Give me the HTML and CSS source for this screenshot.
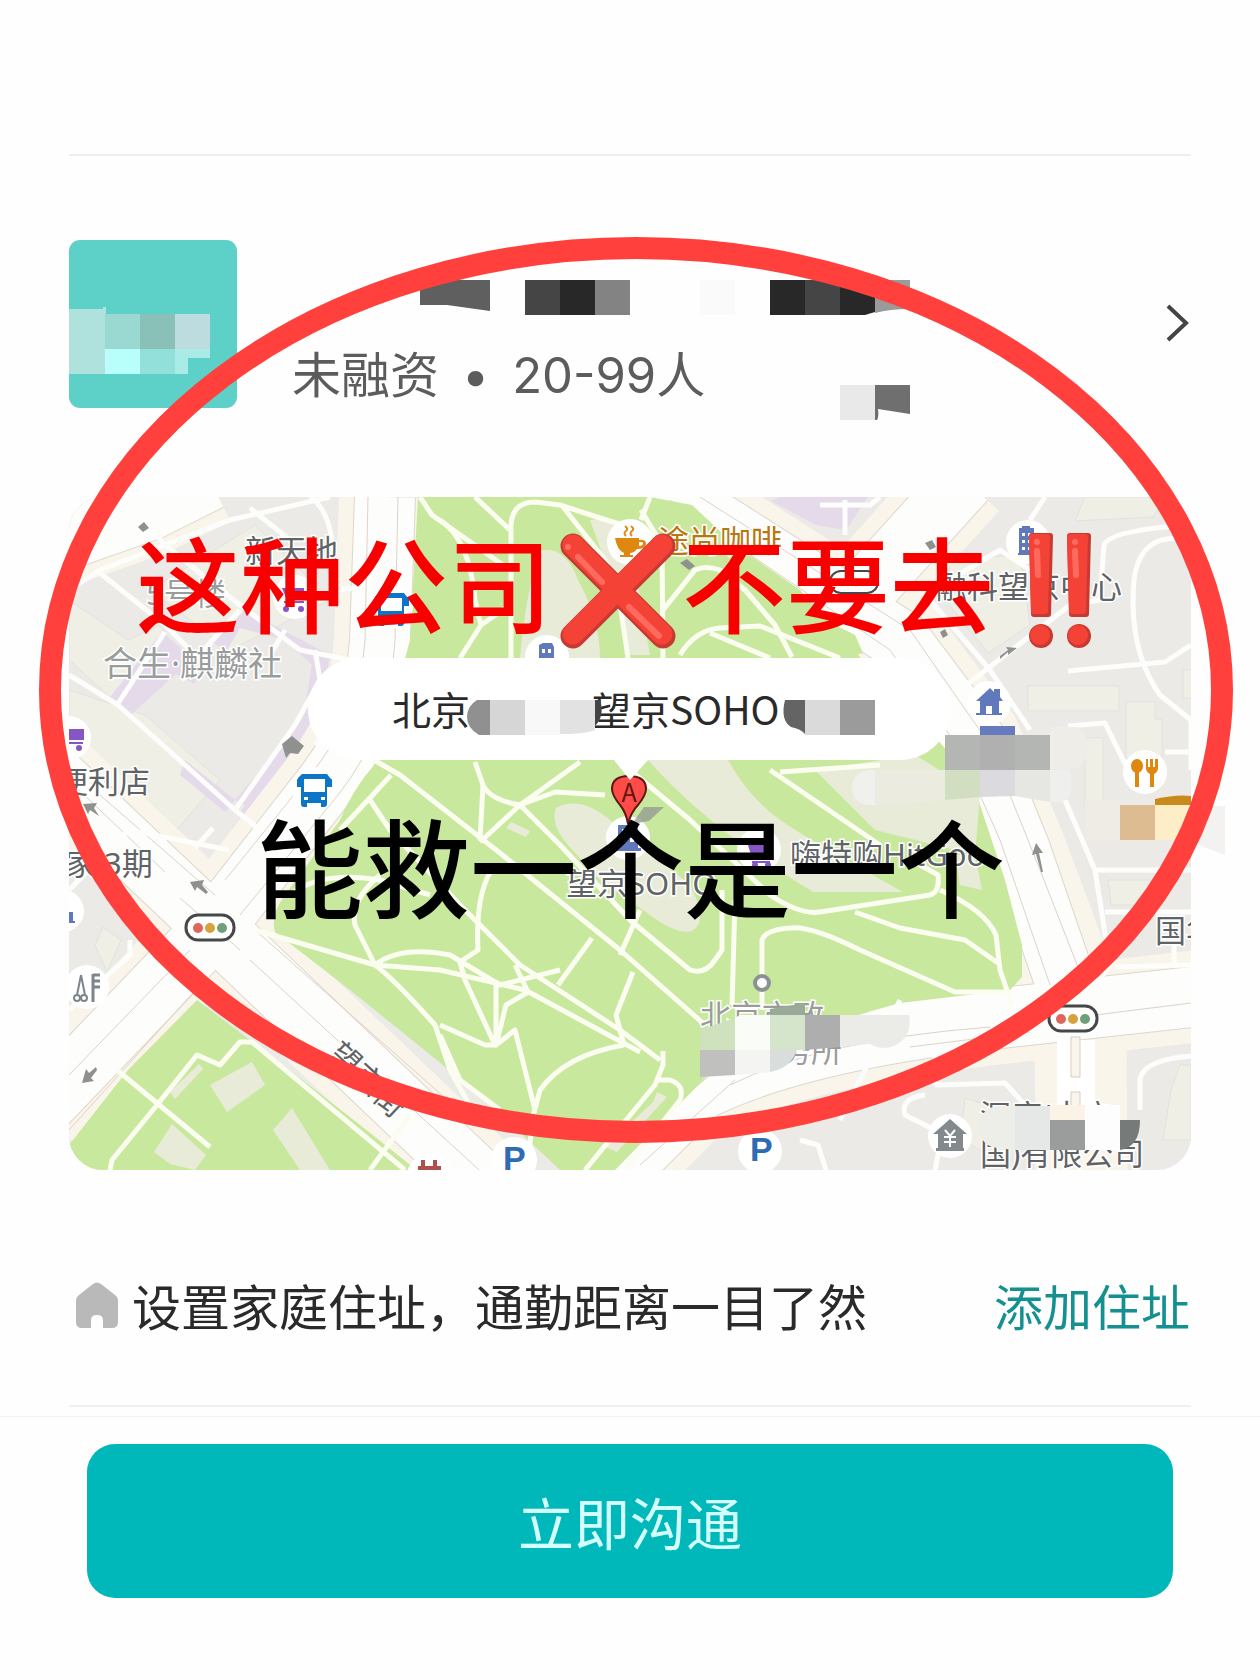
FILE: index.html
```html
<!DOCTYPE html>
<html lang="zh-CN">
<head>
  <meta charset="UTF-8" />
  <meta name="viewport" content="width=device-width, initial-scale=1.0"/>
  <title>公司信息</title>
  <link rel="stylesheet" href="styles.css">
</head>
<body>
  <main class="page">
    <a class="company" href="#">
      <svg class="logo" viewBox="0 0 168 168" aria-hidden="true">
        <rect width="168" height="168" rx="11" fill="#5dd0c7"/>
        <path fill="#b0e2dd" d="M0 69h34v-2h3v67H0z"/>
        <path fill="#9ad8d2" d="M36 74h35v35H36z"/>
        <path fill="#89c0b8" d="M71 74h35v35H71z"/>
        <path fill="#bddcdf" d="M106 74h35v35h-35z"/>
        <path fill="#b8fffc" d="M36 109h35v25H36z"/>
        <path fill="#93dfda" d="M71 109h35v25H71z"/>
        <path fill="#a8ebe7" d="M106 109h35v9h-22v16h-13z"/>
      </svg>
      <div class="info">
        <svg class="name" viewBox="292 280 618 35" aria-label="公司名称">
          <path fill="#5f5f5f" d="M420 280h70v31l-43-6h-27z"/>
          <path fill="#454545" d="M525 280h35v35h-35z"/>
          <path fill="#282828" d="M560 280h35v35h-35z"/>
          <path fill="#838383" d="M595 280h35v35h-35z"/>
          <path fill="#fafafa" d="M700 280h35v35h-35z"/>
          <path fill="#282828" d="M770 280h35v35h-35z"/>
          <path fill="#454545" d="M805 280h35v35h-35z"/>
          <path fill="#282828" d="M840 280h35v32l-10 3h-25z"/>
          <path fill="#9a9a9a" d="M875 280h35v29q-20 0-35 4z"/>
        </svg>
        <div class="meta">
          <div class="facts">未融资 <span class="dot">•</span> 20-99人</div>
          <svg class="smear" viewBox="0 0 70 35" aria-hidden="true">
            <path fill="#e9e9e9" d="M0 0h35v35H0z"/>
            <path fill="#6f6f6f" d="M35 0h35v29l-32-5q1 8-1 11h-2z"/>
          </svg>
        </div>
      </div>
      <svg class="arrow" viewBox="0 0 24 40" aria-hidden="true">
        <path d="M3 3l18 17L3 37" fill="none" stroke="#444" stroke-width="4"/>
      </svg>
    </a>

    <section class="map-card">
      <svg class="map" viewBox="69 497 1122 673" role="img" aria-label="北京望京SOHO地图">
        <rect x="69" y="497" width="1122" height="673" fill="#ebeae7"/>

        <!-- blocks -->
        <g fill="#efefe6" stroke="#e3e1dc" stroke-width="1">
          <path d="M69 600L128 640 160 625 180 655 130 715 69 660z"/>
          <path d="M69 690L145 715 220 780 150 860 69 790z"/>
          <path d="M150 590L255 525 330 600 230 650z"/>
          <path d="M1028 686h91v25h-91z"/>
          <path d="M1126 702h29v17h7v40h-36z"/>
          <path d="M1085 738h18v70h-18z"/>
          <path d="M950 560l70-5 10 70-42 28-40-50z"/>
          <path d="M1085 497h80l-12 20-78 4z"/>
          <path d="M1108 880h45l10 25h-52z"/>
          <path d="M1183 670h10v28h-10z"/>
          <path d="M1180 1065h11v75h-28l8-50z"/>
          <path d="M95 945l8-18 18 13-14 32z"/>
          <path d="M965 1098l30 10-10 45-25-15z"/>
        </g>
        <g fill="#e4daea">
          <path d="M162 632L204 668 194 684 176 674 132 714 110 697z"/>
          <path d="M213 642L245 610 330 655 315 735 255 820 240 812 300 735 312 665 285 640 240 628 226 652z"/>
          <path d="M320 715L304 765 267 816 235 800 270 760 305 715z"/>
          <path d="M185 760L235 800 225 812 180 775z"/>
          <path d="M780 497h88l-22 33-30-5-45-24z"/>
        </g>

        <!-- main roads, each drawn as shoulder, edge, surface and lane lines -->
        <g class="shoulder">
          <path d="M385 497L380 640Q375 720 325 785L212 930 40 1110"/>
          <path d="M40 762L212 925 490 1190"/>
          <path d="M650 480L900 640 975 740 1020 850 1080 1010 1082 1190"/>
          <path d="M600 1190L700 1090Q800 1040 1010 1017L1210 995"/>
          <path d="M50 545L150 510 210 480"/>
          <path d="M965 480L870 585"/>
        </g>
        <g class="edge">
          <path d="M385 497L380 640Q375 720 325 785L212 930 40 1110"/>
          <path d="M40 762L212 925 490 1190"/>
          <path d="M650 480L900 640 975 740 1020 850 1075 1010"/>
          <path d="M600 1190L700 1090Q800 1040 1010 1017L1210 995"/>
          <path d="M50 545L150 510 210 480"/>
          <path d="M965 480L870 585"/>
        </g>
        <g class="road">
          <path d="M385 497L380 640Q375 720 325 785L212 930 40 1110"/>
          <path d="M40 762L212 925 490 1190"/>
          <path d="M650 480L900 640 975 740 1020 850 1075 1010"/>
          <path d="M600 1190L700 1090Q800 1040 1010 1017L1210 995"/>
          <path d="M50 545L150 510 210 480"/>
          <path d="M965 480L870 585"/>
        </g>
        <g class="lane">
          <path d="M368 497L365 640Q360 715 310 775L225 880M398 497L395 640Q390 730 338 795L240 915"/>
          <path d="M60 772L165 872M180 898L240 950M250 960L490 1180M100 795L215 895M255 930L470 1120"/>
          <path d="M190 950L69 1075M200 985L69 1130"/>
          <path d="M670 500L890 650 960 750 1000 840 1050 985M700 497L910 630 990 745 1040 870 1085 985"/>
          <path d="M610 1160L710 1075M640 1165L735 1080M730 1085Q820 1040 990 1027M1095 1015L1191 1003M910 1047L1030 1032"/>
        </g>
        <path d="M1057 1040h38v70h-38z" fill="#fff"/>
        <path d="M1071 1037h9v40h-9zM1071 1092h9v20h-9z" fill="#faf5ec" stroke="#d8cdbf"/>

        <!-- parks -->
        <g fill="#c8e89d">
          <path d="M418 497L410 640 378 760Q352 790 340 820L285 895Q270 915 275 932L350 990 480 1095 560 1170H615L710 1073Q800 1030 900 1003L1010 990 1022 977V945L1005 880 970 775 860 657 800 590 735 545 692 505 650 497z"/>
          <path d="M835 625l20 10 8 18-18 5-35-20z"/>
          <path d="M197 1000L128 1070 69 1145V1175H420L410 1165Q330 1100 197 1000z"/>
        </g>
        <g fill="#e9ebd9">
          <path d="M540 551Q565 545 578 580 600 620 600 658H520Q526 590 540 551z"/>
          <path d="M590 520q30-5 40 20l20 115h-22L610 575z"/>
          <path d="M648 760h80q22 40 55 62 30 20 120 70h-90Q710 830 648 760z"/>
          <path d="M815 770l100-15 65 40-5 60-100-25z"/>
          <path d="M556 808Q580 795 610 820L690 885Q705 915 698 925 690 940 660 922L600 880 568 845Q550 825 556 808z"/>
          <path d="M511 822l19 9-4 6-20-9z"/>
          <path d="M210 1085L252 1062 265 1085 227 1112z"/>
          <path d="M170 1092l29-28 4 5-28 30z"/>
          <path d="M273 1130L292 1108 330 1170H300z"/>
          <path d="M154 1152L172 1124 206 1155 195 1170 170 1164z"/>
          <path d="M657 1092l10 5-50 55-12-5 48-45z"/>
          <path d="M955 855h20l7 35-22-5z"/>
        </g>

        <!-- park paths -->
        <g class="path">
          <path d="M420 497L432 515 510 570M475 497L510 530M650 497L641 520"/>
          <path d="M511 658V530Q510 502 535 502L560 505 600 518 655 535 690 550"/>
          <path d="M563 507L605 560 618 590 628 658M641 510L662 545 663 658"/>
          <path d="M440 520Q470 540 475 600L481 625 460 658M481 625L510 605"/>
          <path d="M663 610L695 570Q705 565 720 570L745 590 775 625 792 657M680 655Q695 630 720 628L760 626 840 658M710 633L770 658"/>
          <path d="M374 760L400 775 500 853 620 950 705 1025"/>
          <path d="M391 775L368 800 340 830M370 800L390 830 460 905 520 965 620 1030 660 1060"/>
          <path d="M475 762L483 785Q490 800 520 805L560 845 630 920 690 970Q705 975 715 960L722 950V890"/>
          <path d="M483 785L480 840M580 762L520 805 480 842M520 805L555 792 605 795"/>
          <path d="M630 770L690 820 770 895Q800 915 820 912L930 895Q940 892 938 875L920 865"/>
          <path d="M770 770L880 845M780 772L880 765"/>
          <path d="M855 912L900 928 965 940 998 963M940 890Q985 910 996 935L1000 970 1012 1005"/>
          <path d="M762 1010V940Q765 930 790 928 810 925 860 950L955 992H1010"/>
          <path d="M735 900L732 1005M640 910L620 955M592 938L558 985M633 972L616 1015 624 1045"/>
          <path d="M255 930L375 965Q395 980 435 1025L450 1070 475 1115"/>
          <path d="M375 965Q400 945 450 955L500 985 560 970M375 965L440 970 525 990 640 1052"/>
          <path d="M290 895Q320 870 380 880L430 895M380 875Q350 900 355 925L375 965"/>
          <path d="M495 865Q475 890 478 950L460 962 465 980 495 1045M496 980V1045L515 1030 535 1110"/>
          <path d="M440 1025L485 1045H496L506 1005 528 992 515 965"/>
          <path d="M440 1035L460 1080 500 1110"/>
          <path d="M624 1045Q565 1055 540 1090L532 1120 528 1170"/>
          <path d="M663 1051V1065L655 1085 585 1170M655 1080H670Q685 1085 680 1100L625 1170"/>
          <path d="M117 1070L210 1147M157 1105L197 1055 220 1065 240 1042H252L405 1170M157 1105L112 1160 110 1170"/>
          <path d="M370 1170L410 1115"/>
        </g>

        <!-- side streets -->
        <g class="street">
          <path d="M69 675L118 705 185 765 235 810 260 830"/>
          <path d="M69 590L100 570 230 520 330 497M140 515L165 545 240 605 300 650 350 660"/>
          <path d="M100 573L165 625 200 660M117 705L165 632M190 500L195 520M250 508L290 540M310 497Q330 510 333 550"/>
          <path d="M240 610L190 665M285 630L270 655M235 810L295 725 320 680 315 650"/>
          <path d="M340 590l20-3M69 890l60-60 100 20M195 848l18-20M69 1010L130 955V940"/>
          <path d="M350 700L315 745M960 690L1070 605 1100 600 1104 545Q1110 530 1191 525"/>
          <path d="M1191 540Q1140 530 1134 580 1128 650 1160 695L1191 720V770M1068 671L1165 662 1191 645M1068 726L1105 723 1128 770"/>
          <path d="M1045 497L1030 520M950 580L1000 550 1030 570M930 600L990 670 1030 730"/>
          <path d="M1065 800L1095 870 1110 965 1085 1000M1095 870h96M1105 912h86M1115 967L1191 965M1174 965v-20M1165 752h26"/>
          <path d="M900 1000L840 1120M935 1085V1050M935 1085L1005 1083 1025 1105M925 1095Q900 1098 905 1115L935 1130M1140 1110V1080Q1142 1060 1191 1056"/>
          <path d="M800 1140l18 5 8 25M935 1170l5-25"/>
          <path d="M845 500v35M820 505h50l10-8"/>
        </g>

        <!-- direction arrows -->
        <g fill="#8f918e">
          <path d="M82 1083l4-14 3 4 7-6 1 3-6 8 3 3z"/>
          <path d="M190 882l14-2-2 5 6 7-2 2-9-7-2 4z"/>
          <path d="M83 804l14-1-3 5 5 8-9-6-2 4z"/>
          <path d="M1036 843l7 10h-4l4 19h-2l-5-18-4 1z"/>
          <path d="M1017 648l-9 7v-3l-8 7v-3l8-6-2-3z"/>
          <path d="M282 744l10-8 12 10-6 8-8-1-4 5z"/>
          <path d="M138 527l6-5 5 6-6 4zM680 563l7-4 8 7-6 4zM925 543l7-3 4 7-6 3zM940 632l5-3 3 6-5 3z"/>
        </g>

        <!-- place labels -->
        <g class="label">
          <text x="245" y="562">新天地</text>
          <text x="146" y="605" class="dim">5号楼</text>
          <text x="103" y="676" class="dim wide">合生·麒麟社</text>
          <text x="57" y="793">便利店</text>
          <text x="65" y="875">家 3期</text>
          <text x="936" y="598">融科望京中心</text>
          <text x="658" y="552" class="cafe">途尚咖啡</text>
          <text x="790" y="866">嗨特购HitGoo</text>
          <text x="566" y="895">望京SOHO</text>
          <text x="700" y="1027" class="dim">北京市政</text>
          <text x="780" y="1062" class="dim">务所</text>
          <text x="1155" y="942">国华</text>
          <text x="980" y="1127">深度(中户</text>
          <text x="980" y="1165">国)有限公司</text>
          <text transform="translate(326 1056) rotate(43)">望京街</text>
        </g>

        <!-- place icons -->
        <g fill="#fff">
          <circle cx="69" cy="738" r="22"/><circle cx="295" cy="597" r="22"/><circle cx="314" cy="789" r="22"/>
          <circle cx="391" cy="607" r="22"/><circle cx="630" cy="542" r="23"/><circle cx="547" cy="657" r="22"/>
          <circle cx="1028" cy="542" r="22"/><circle cx="989" cy="703" r="22"/><circle cx="1145" cy="772" r="22"/>
          <circle cx="628" cy="838" r="22"/><circle cx="759" cy="850" r="22"/><circle cx="63" cy="911" r="21"/>
          <circle cx="87" cy="987" r="22"/><circle cx="514" cy="1160" r="23"/><circle cx="760" cy="1151" r="22"/>
          <circle cx="950" cy="1136" r="22"/><circle cx="430" cy="1176" r="23"/>
        </g>
        <g id="bus">
          <path fill="#0d75c8" fill-rule="evenodd" d="M302 774h25l3 4v9h-3v17q0 3-3 3h-3v-4h-14v4h-3q-3 0-3-3v-17h-3v-9zM304 779v13h21v-13zM304 797v3h4v-3zM321 797v3h4v-3z"/>
          <path fill="none" stroke="#0d75c8" stroke-width="2" d="M302 777l-4 3v7M327 777l4 3v7"/>
        </g>
        <use href="#bus" x="77" y="-181"/>
        <g fill="#8657c4">
          <path d="M69 729h15v11H69zM69 742h14v2H69z"/><circle cx="79" cy="748" r="3"/>
          <path d="M282 588h22v10h-18zM284 601h20v2h-20z"/><circle cx="286" cy="609" r="3"/><circle cx="301" cy="609" r="3"/>
          <path d="M747 842l-3-2h4l2 4h22l-3 14h-17zM752 861h18v2h-18z"/><circle cx="755" cy="865" r="3"/><circle cx="768" cy="865" r="3"/>
        </g>
        <path fill="#e08710" d="M615 538h24v2q7-1 7 4 0 5-9 5-3 4-7 4v2h3v2h-13v-2h4v-2q-7-3-9-15zm24 4v4q4 0 4-3 0-1-4-1z"/>
        <path d="M625 526q4 3 1 5t0 5M631 526q4 3 1 5t0 5" fill="none" stroke="#e08710" stroke-width="2"/>
        <g fill="#6079bd" fill-rule="evenodd">
          <path d="M539 645l4-2h9l2 4v11h-15zM542 649v4h3v-4zM548 649v4h3v-4z"/>
          <path d="M1019 528h3v-2h8v2h4v27h-16v-2h1zM1022 533v3h3v-3zM1028 533v3h3v-3zM1022 540v3h3v-3zM1028 540v3h3v-3zM1022 547v3h3v-3zM1028 547v3h3v-3z"/>
          <path d="M976 701l14-13 4 4v-3h6v8l3 4h-4v12h3v2h-26v-2h4v-12zM986 706v8h6v-8z"/>
          <path d="M618 825h20v23h3v3h-26v-3h3zM622 829v4h4v-4zM630 829v4h4v-4zM622 838v4h4v-4zM630 838v4h4v-4z"/>
          <path d="M69 912h4v9h2v2h-6z"/>
        </g>
        <g fill="#e08710">
          <ellipse cx="1137" cy="766" rx="6" ry="7"/><path d="M1135 770h4v17h-4z"/>
          <path d="M1146 759h2v8h2v-8h3v8h2v-8h3v9q0 4-4 6v13h-4v-13q-4-2-4-6z"/>
        </g>
        <g fill="none" stroke="#7d878b" stroke-width="2">
          <path d="M81 975l-4 20M81 975l4 20"/><circle cx="77" cy="998" r="3"/><circle cx="84" cy="998" r="3"/>
          <path d="M93 974v28M93 975h7M93 981h7M93 987h7" stroke-width="3"/>
        </g>
        <path fill="#828a8d" d="M933 1134l17-15 17 15h-4v14h1v3h-28v-3h2v-14z"/>
        <path fill="none" stroke="#fff" stroke-width="2" d="M945 1130l5 6 5-6M944 1137h12M944 1142h12M950 1136v11"/>
        <path fill="#b1504a" d="M418 1166h3v-6h4v6h8v-6h4v6h4v6h-23z"/>
        <circle cx="762" cy="983" r="7" fill="#fff" stroke="#8b9295" stroke-width="4"/>
        <g class="parking">
          <text x="503" y="1170">P</text>
          <text x="750" y="1161">P</text>
        </g>
        <g id="signal">
          <rect x="186" y="915" width="48" height="25" rx="12" fill="#fff" stroke="#454849" stroke-width="3"/>
          <circle cx="198" cy="928" r="5" fill="#e0655c"/><circle cx="210" cy="928" r="5" fill="#d9a13b"/><circle cx="222" cy="928" r="5" fill="#6fa077"/>
        </g>
        <use href="#signal" x="863" y="91"/>
        <rect x="830" y="571" width="48" height="22" rx="11" fill="#fff" stroke="#454849" stroke-width="2"/>

        <!-- smeared names -->
        <path fill="#667bbd" d="M980 726h35v9h-35z"/>
        <path fill="#b4b6b3" d="M945 735h105v35H945z"/>
        <path fill="#b0b0b0" d="M980 735h35v35h-35z"/>
        <path fill="#eeede8" d="M1050 727h25q12 2 12 20t-12 22h-25z"/>
        <path fill="#f0f0ec" d="M875 770h-8q-15 4-15 18t15 17h8z"/>
        <path fill="#ebebe0" d="M875 770h70v30l-60 5h-10z"/>
        <path fill="#d2dec1" d="M945 770h35v27l-35 3z"/>
        <path fill="#dadadf" d="M980 770h35v26l-35 1z"/>
        <path fill="#e6e6e3" d="M1015 770h35v32l-35-6z"/>
        <path fill="#efefee" d="M1050 770h20q5 27-8 32h-12z"/>
        <path fill="#efece6" d="M1085 800h35v40h-35z"/>
        <path fill="#dcbc90" d="M1120 805h35v35h-35z"/>
        <path fill="#fdeec8" d="M1155 805h36v35h-36z"/>
        <path fill="#c98a1c" d="M1155 799q22-5 36-3v9h-36z"/>
        <path fill="#d0e2bd" d="M700 1030l35-12v32h-35z"/>
        <path fill="#c0c1bf" d="M700 1050h35v25l-35 2z"/>
        <path fill="#fafcf7" d="M735 1018l5-3h30v35h-35z"/>
        <path fill="#f4f4f2" d="M735 1050h35v22l-35 3z"/>
        <path fill="#9aaa98" d="M770 1009l35-6v12h-35z"/>
        <path fill="#d5e5cb" d="M770 1015h35v35h-35z"/>
        <path fill="#d9dddb" d="M770 1050h27q-6 18-27 22z"/>
        <path fill="#aeaeae" d="M805 1015h35v32l-35 3z"/>
        <path fill="#ebebe7" d="M840 1015h69q4 22-15 31-12 5-24-2l-30 3z"/>
        <path fill="#eeeee8" d="M1015 1106h-18q-20 4-18 25 3 15 18 17l18 2z"/>
        <path fill="#e6e8e7" d="M1015 1106h35v44h-35z"/>
        <path fill="#fbf3e5" d="M1050 1105h35v15h-35z"/>
        <path fill="#9a9d9c" d="M1050 1120h35v30h-35z"/>
        <path fill="#fdfdfd" d="M1085 1105h35v45h-35z"/>
        <path fill="#767a78" d="M1120 1120h20q0 27-20 30z"/>

        <!-- address bubble and pin -->
        <path fill="#8f918e" fill-opacity=".7" d="M632 824l12-17 20 0-15 14z"/>
        <path fill="#ff4c48" stroke="#5e1712" stroke-width="2" d="M628 824q-2-12-8-19-8-10-8-16 0-13 17-13t17 13q0 6-8 16-7 7-10 19z"/>
        <text x="629" y="802" class="pin">A</text>
        <path fill="#fff" d="M359 658H900a51 51 0 0 1 0 102H648l-18 20-16-20H359a51 51 0 0 1 0-102z"/>
        <text x="392" y="725" class="address">北京</text>
        <text x="592" y="725" class="address">望京SOHO</text>
        <path fill="#909090" d="M490 700h-13q-10 6-10 17t12 18h11z"/>
        <path fill="#d6d6d6" d="M490 700h35v35h-35z"/>
        <path fill="#f8f8f8" d="M525 700h35v35h-35z"/>
        <path fill="#e2e2e2" d="M560 700h35v30q-10 4-35 4z"/>
        <path fill="#444" d="M595 700h5q5 16-5 26z"/>
        <path fill="#646464" d="M805 700h-20q-5 20 6 27 10 2 14 7z"/>
        <path fill="#dadada" d="M805 700h35v35h-35z"/>
        <path fill="#9b9b9b" d="M840 700h35v35h-35z"/>
      </svg>

      <!-- hand-drawn ring and captions lie over the card -->
      <svg class="notes" viewBox="69 497 1122 673">
        <path fill="#f3f2f0" d="M1191 806h34v49l-34-13z"/>
        <g class="caption">
          <text x="136" y="626" fill="#f90000">这种公司</text>
          <text x="682" y="626" fill="#f90000">不要去</text>
          <text x="256" y="910" class="second">能救一个是一个</text>
        </g>
        <g fill="none" stroke-linecap="round">
          <path d="M573 546l90 90M663 546l-90 90" stroke="#c73a34" stroke-width="25"/>
          <path d="M573 545l89 89M662 545l-89 89" stroke="#f44336" stroke-width="21"/>
          <path d="M578 557l24 25M629 607l30 29" stroke="#ff6a5e" stroke-width="6"/>
        </g>
        <circle cx="568" cy="547" r="3" fill="#ff6a5e"/>
        <g id="mark">
          <path fill="#c73a34" d="M1032 533h18q3 0 3 3l-2 78q0 3-3 3h-14q-3 0-3-3l-2-78q0-3 3-3z"/>
          <path fill="#f44336" d="M1032 534h15q3 0 3 3l-2 74q0 3-3 3h-11q-3 0-3-3l-2-74q0-3 3-3z"/>
          <path d="M1037 551l1 24" stroke="#ff6a5e" stroke-width="6" stroke-linecap="round"/>
          <circle cx="1037" cy="542" r="3" fill="#ff6a5e"/>
          <circle cx="1041" cy="636" r="12" fill="#c73a34"/>
          <circle cx="1040" cy="635" r="10" fill="#f44336"/>
        </g>
        <use href="#mark" x="38"/>
        <ellipse cx="636" cy="690" rx="586" ry="442" fill="none" stroke="#ff403c" stroke-width="22"/>
      </svg>
    </section>

    <section class="commute">
      <svg class="home" viewBox="0 0 42 46" aria-hidden="true">
        <path fill="#b9b9b9" d="M17 2q4-3 8 0l14 11q3 2 3 6v21q0 6-6 6h-9V38q0-5-6-5t-6 5v8H6q-6 0-6-6V19q0-4 3-6z"/>
      </svg>
      <span>设置家庭住址，通勤距离一目了然</span>
      <a class="add" href="#">添加住址</a>
    </section>
  </main>

  <footer class="bar">
    <button class="chat-btn" type="button">立即沟通</button>
  </footer>
</body>
</html>
```
FILE: styles.css
```css
* {
  box-sizing: border-box;
}

body {
  margin: 0;
  background: #fefefe;
  color: #2a2a2a;
  font-family: "Noto Sans CJK SC", sans-serif;
  overflow-x: hidden;
}

svg {
  display: block;
  flex: none;
}

.page {
  margin: 0 69px;
  padding-top: 154px;
  border-bottom: 2px solid #f0f0f0;
}

.company {
  display: flex;
  align-items: flex-start;
  border-top: 2px solid #eee;
  padding: 84px 2px 77px 0;
  color: #5c5c5c;
  text-decoration: none;
}

.logo {
  width: 168px;
}

.info {
  flex: 1;
  margin-left: 55px;
  padding-top: 40px;
}

.name {
  width: 618px;
}

.meta {
  display: flex;
  align-items: flex-start;
  font-family: Inter, "Noto Sans CJK SC", sans-serif;
  font-size: 49px;
  line-height: 72px;
  margin-top: 25px;
}

.facts {
  width: 548px;
  white-space: nowrap;
}

.dot {
  margin: 0 9px;
}

.smear {
  width: 70px;
  margin-top: 45px;
}

.arrow {
  width: 24px;
  margin-top: 63px;
}

.map-card {
  position: relative;
}

.map {
  width: 100%;
  border-radius: 34px;
}

.shoulder path,
.edge path,
.road path,
.lane path,
.path path,
.street path {
  fill: none;
}

.shoulder {
  stroke: #faf5ea;
  stroke-width: 92px;
}

.edge {
  stroke: #ddd6cc;
  stroke-width: 62px;
}

.road {
  stroke: #fdfdfc;
  stroke-width: 60px;
}

.lane {
  stroke: #ddd2c8;
  stroke-width: 1px;
}

.path {
  stroke: #fbfdf1;
  stroke-width: 5px;
  stroke-linejoin: round;
}

.street {
  stroke: #fdfdfb;
  stroke-width: 5px;
  stroke-linejoin: round;
}

.label {
  font-family: "Noto Sans", "Noto Sans CJK SC", sans-serif;
  font-size: 31px;
  fill: #606365;
  stroke: #fff;
  stroke-width: 3px;
  paint-order: stroke;
}

.label .wide {
  font-size: 34px;
}

.label .dim {
  fill: #9a9c9c;
}

.label .cafe {
  fill: #b9770f;
}

.parking {
  font: bold 34px "Liberation Sans", sans-serif;
  fill: #2d6cb4;
}

.pin {
  font-size: 25px;
  text-anchor: middle;
  fill: #5e1712;
}

.address {
  font-size: 39px;
  fill: #2a2a2a;
}

.notes {
  position: absolute;
  inset: 0;
  width: 100%;
  overflow: visible;
  pointer-events: none;
}

.caption {
  font-size: 104px;
  font-weight: 500;
}

.caption .second {
  font-size: 107px;
}

.commute {
  display: flex;
  align-items: center;
  padding: 99px 1px 64px 7px;
  font-size: 49px;
  line-height: 72px;
}

.home {
  width: 42px;
  margin-right: 14px;
}

.add {
  margin-left: auto;
  color: #159090;
  text-decoration: none;
}

.bar {
  margin-top: 9px;
  border-top: 1px solid #f3f3f3;
  padding: 27px 87px 80px;
}

.chat-btn {
  display: block;
  width: 100%;
  border: none;
  border-radius: 28px;
  background: #00b7b9;
  color: #d4ffff;
  font-family: inherit;
  font-size: 56px;
  line-height: 82px;
  padding: 36px;
  cursor: pointer;
}
```
